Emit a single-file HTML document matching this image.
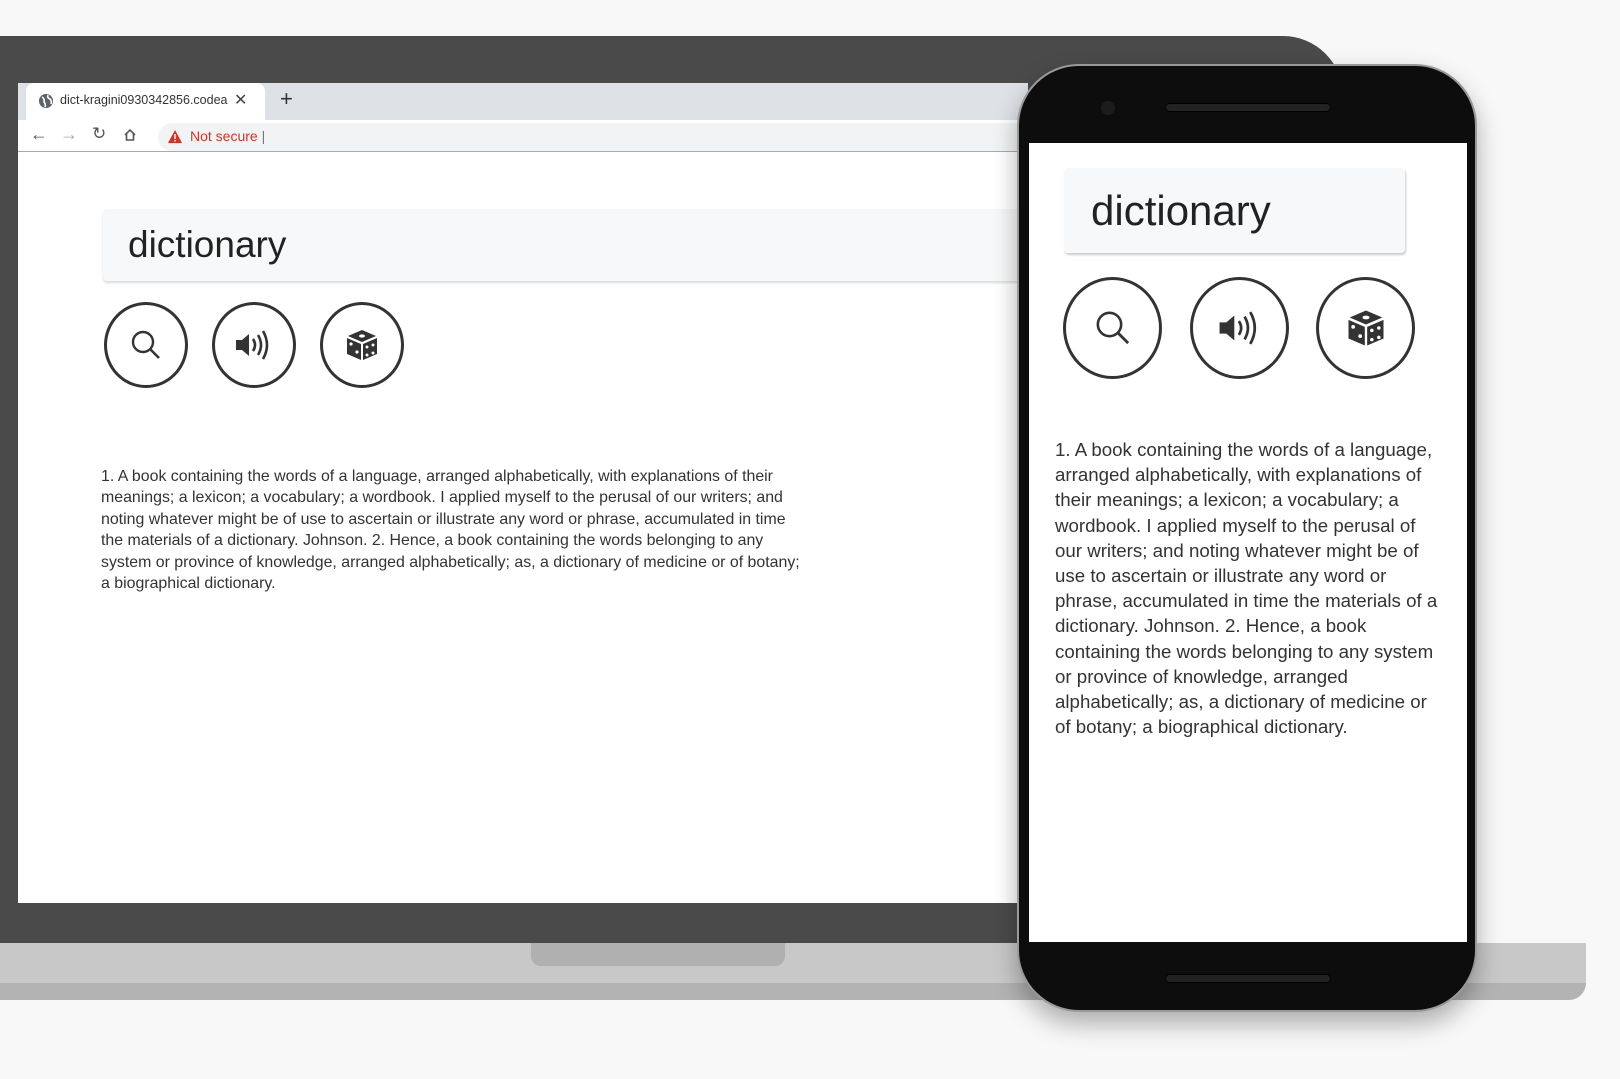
<!DOCTYPE html>
<html><head><meta charset="utf-8">
<style>
*{margin:0;padding:0;box-sizing:border-box}
body{width:1620px;height:1079px;background:#f8f8f8;position:relative;overflow:hidden;font-family:"Liberation Sans",sans-serif}
.abs{position:absolute}
.lap{left:0;top:36px;width:1343px;height:908px;background:#4a4a4a;border-radius:0 60px 0 0}
.base1{left:0;top:943px;width:1586px;height:40px;background:#c8c8c8}
.base2{left:0;top:983px;width:1586px;height:17px;background:#b3b3b3;border-radius:0 0 40px 0}
.notch{left:531px;top:943px;width:254px;height:23px;background:#b0b0b0;border-radius:0 0 10px 10px}
.screen{left:18px;top:83px;width:1010px;height:820px;background:#fff;overflow:hidden}
.tabbar{left:0;top:0;width:100%;height:37px;background:#dee1e6}
.tab{left:8px;top:0;width:239px;height:37px;background:#fff;border-radius:8px 8px 0 0}
.addr{left:0;top:37px;width:100%;height:32px;background:#fff;border-bottom:1px solid #aaa}
.omni{left:140px;top:3px;width:900px;height:28px;background:#f1f3f4;border-radius:14px}
.circ{border:3px solid #333;border-radius:50%;display:flex;align-items:center;justify-content:center;background:#fff}
.phone{left:1017px;top:64px;width:460px;height:948px;background:#0d0d0d;border-radius:62px;box-shadow:0 12px 25px rgba(0,0,0,.3);border:2px solid #9a9a9a}
.pscreen{left:1029px;top:143px;width:438px;height:799px;background:#fff}
</style></head><body>
<div class="abs lap"></div>
<div class="abs base1"></div>
<div class="abs base2"></div>
<div class="abs notch"></div>
<div class="abs screen">
  <div class="abs tabbar"></div>
  <div class="abs tab">
    <svg class="abs" style="left:12px;top:10px" width="16" height="16" viewBox="0 0 16 16"><circle cx="8" cy="8" r="7" fill="#5f6368"/><path d="M4 4 Q7 6 6 9 Q8 11 7 14 M10 2 Q9 5 12 6 Q14 8 13 11" stroke="#fff" stroke-width="1.6" fill="none"/></svg>
    <div class="abs" style="left:34px;top:10px;font-size:12.5px;color:#333;white-space:nowrap;width:168px;overflow:hidden">dict-kragini0930342856.codeanyapp</div>
    <div class="abs" style="left:208px;top:7px;font-size:16px;color:#444">✕</div>
  </div>
  <div class="abs" style="left:262px;top:3px;font-size:22px;color:#333">+</div>
  <div class="abs addr">
    <div class="abs" style="left:12px;top:4px;font-size:18px;color:#555">←</div>
    <div class="abs" style="left:42px;top:4px;font-size:18px;color:#aaa">→</div>
    <div class="abs" style="left:74px;top:4px;font-size:17px;color:#555">↻</div>
    <svg class="abs" style="left:105px;top:8px" width="14" height="14" viewBox="0 0 14 14"><path d="M2 7 L7 2 L12 7 M3.5 6 V12 H10.5 V6" stroke="#555" stroke-width="1.6" fill="none"/></svg>
    <div class="abs omni">
      <svg class="abs" style="left:10px;top:7px" width="14" height="13" viewBox="0 0 14 13"><path d="M7 0 L14 13 H0Z" fill="#d93025"/><rect x="6.3" y="4" width="1.4" height="5" fill="#fff"/><rect x="6.3" y="10" width="1.4" height="1.4" fill="#fff"/></svg>
      <div class="abs" style="left:32px;top:5px;font-size:14px;color:#d93025">Not secure <span style="color:#777">|</span></div>
    </div>
  </div>
  <div class="abs" style="left:85px;top:126px;width:960px;height:72px;background:#f7f8f9;box-shadow:0 2px 2px #ddd;border-radius:4px"></div>
  <div class="abs" style="left:110px;top:141px;font-size:37px;color:#222">dictionary</div>
  <div class="abs circ" style="left:86px;top:219px;width:84px;height:86px">
    <svg width="36" height="36" viewBox="0 0 36 36"><circle cx="15" cy="15" r="10" stroke="#333" stroke-width="2.4" fill="none"/><path d="M22 22 L31 31" stroke="#333" stroke-width="2.6"/></svg></div>
  <div class="abs circ" style="left:194px;top:219px;width:84px;height:86px">
    <svg width="44" height="36" viewBox="0 0 44 36"><path d="M4 13 H10 L17 7 V29 L10 23 H4Z" fill="#333"/><path d="M21 12 Q25 18 21 24 M26 8 Q32 18 26 28 M31 4 Q39 18 31 32" stroke="#333" stroke-width="2.6" fill="none"/></svg></div>
  <div class="abs circ" style="left:302px;top:219px;width:84px;height:86px">
    <svg width="36" height="36" viewBox="0 0 36 36"><path d="M18 3 L32 9 L18 15 L4 9Z" fill="#333"/><path d="M3 11 L17 17 V33 L3 27Z M19 17 L33 11 V27 L19 33Z" fill="#333"/><ellipse cx="18" cy="9" rx="3" ry="1.6" fill="#fff"/><circle cx="7" cy="17" r="1.6" fill="#fff"/><circle cx="13" cy="25" r="1.6" fill="#fff"/><circle cx="23" cy="20" r="1.5" fill="#fff"/><circle cx="29" cy="18" r="1.5" fill="#fff"/><circle cx="23" cy="28" r="1.5" fill="#fff"/><circle cx="29" cy="26" r="1.5" fill="#fff"/></svg></div>
  <div class="abs" style="left:83px;top:383px;font-size:15.9px;line-height:21.4px;color:#333;white-space:nowrap">1. A book containing the words of a language, arranged alphabetically, with explanations of their<br>meanings; a lexicon; a vocabulary; a wordbook. I applied myself to the perusal of our writers; and<br>noting whatever might be of use to ascertain or illustrate any word or phrase, accumulated in time<br>the materials of a dictionary. Johnson. 2. Hence, a book containing the words belonging to any<br>system or province of knowledge, arranged alphabetically; as, a dictionary of medicine or of botany;<br>a biographical dictionary.</div>
</div>
<div class="abs phone"></div>
<div class="abs" style="left:1165px;top:103px;width:166px;height:9px;background:#222;border-radius:5px;border:1px solid #000"></div>
<div class="abs" style="left:1101px;top:101px;width:14px;height:14px;background:#1c1c1c;border-radius:50%"></div>
<div class="abs" style="left:1165px;top:974px;width:166px;height:9px;background:#222;border-radius:5px;border:1px solid #000"></div>
<div class="abs pscreen">
  <div class="abs" style="left:35px;top:25px;width:341px;height:85px;background:#f7f8f9;box-shadow:1px 2px 2px #ccc;border-radius:4px"></div>
  <div class="abs" style="left:62px;top:44px;font-size:42px;color:#222">dictionary</div>
  <div class="abs circ" style="left:34px;top:134px;width:99px;height:102px">
    <svg width="42" height="42" viewBox="0 0 36 36"><circle cx="15" cy="15" r="10" stroke="#333" stroke-width="2.2" fill="none"/><path d="M22 22 L31 31" stroke="#333" stroke-width="2.4"/></svg></div>
  <div class="abs circ" style="left:161px;top:134px;width:99px;height:102px">
    <svg width="50" height="42" viewBox="0 0 44 36"><path d="M4 13 H10 L17 7 V29 L10 23 H4Z" fill="#333"/><path d="M21 12 Q25 18 21 24 M26 8 Q32 18 26 28 M31 4 Q39 18 31 32" stroke="#333" stroke-width="2.4" fill="none"/></svg></div>
  <div class="abs circ" style="left:287px;top:134px;width:99px;height:102px">
    <svg width="42" height="42" viewBox="0 0 36 36"><path d="M18 3 L32 9 L18 15 L4 9Z" fill="#333"/><path d="M3 11 L17 17 V33 L3 27Z M19 17 L33 11 V27 L19 33Z" fill="#333"/><ellipse cx="18" cy="9" rx="3" ry="1.6" fill="#fff"/><circle cx="7" cy="17" r="1.6" fill="#fff"/><circle cx="13" cy="25" r="1.6" fill="#fff"/><circle cx="23" cy="20" r="1.5" fill="#fff"/><circle cx="29" cy="18" r="1.5" fill="#fff"/><circle cx="23" cy="28" r="1.5" fill="#fff"/><circle cx="29" cy="26" r="1.5" fill="#fff"/></svg></div>
  <div class="abs" style="left:26px;top:294px;font-size:18.7px;line-height:25.2px;color:#333;white-space:nowrap">1. A book containing the words of a language,<br>arranged alphabetically, with explanations of<br>their meanings; a lexicon; a vocabulary; a<br>wordbook. I applied myself to the perusal of<br>our writers; and noting whatever might be of<br>use to ascertain or illustrate any word or<br>phrase, accumulated in time the materials of a<br>dictionary. Johnson. 2. Hence, a book<br>containing the words belonging to any system<br>or province of knowledge, arranged<br>alphabetically; as, a dictionary of medicine or<br>of botany; a biographical dictionary.</div>
</div>
</body></html>
